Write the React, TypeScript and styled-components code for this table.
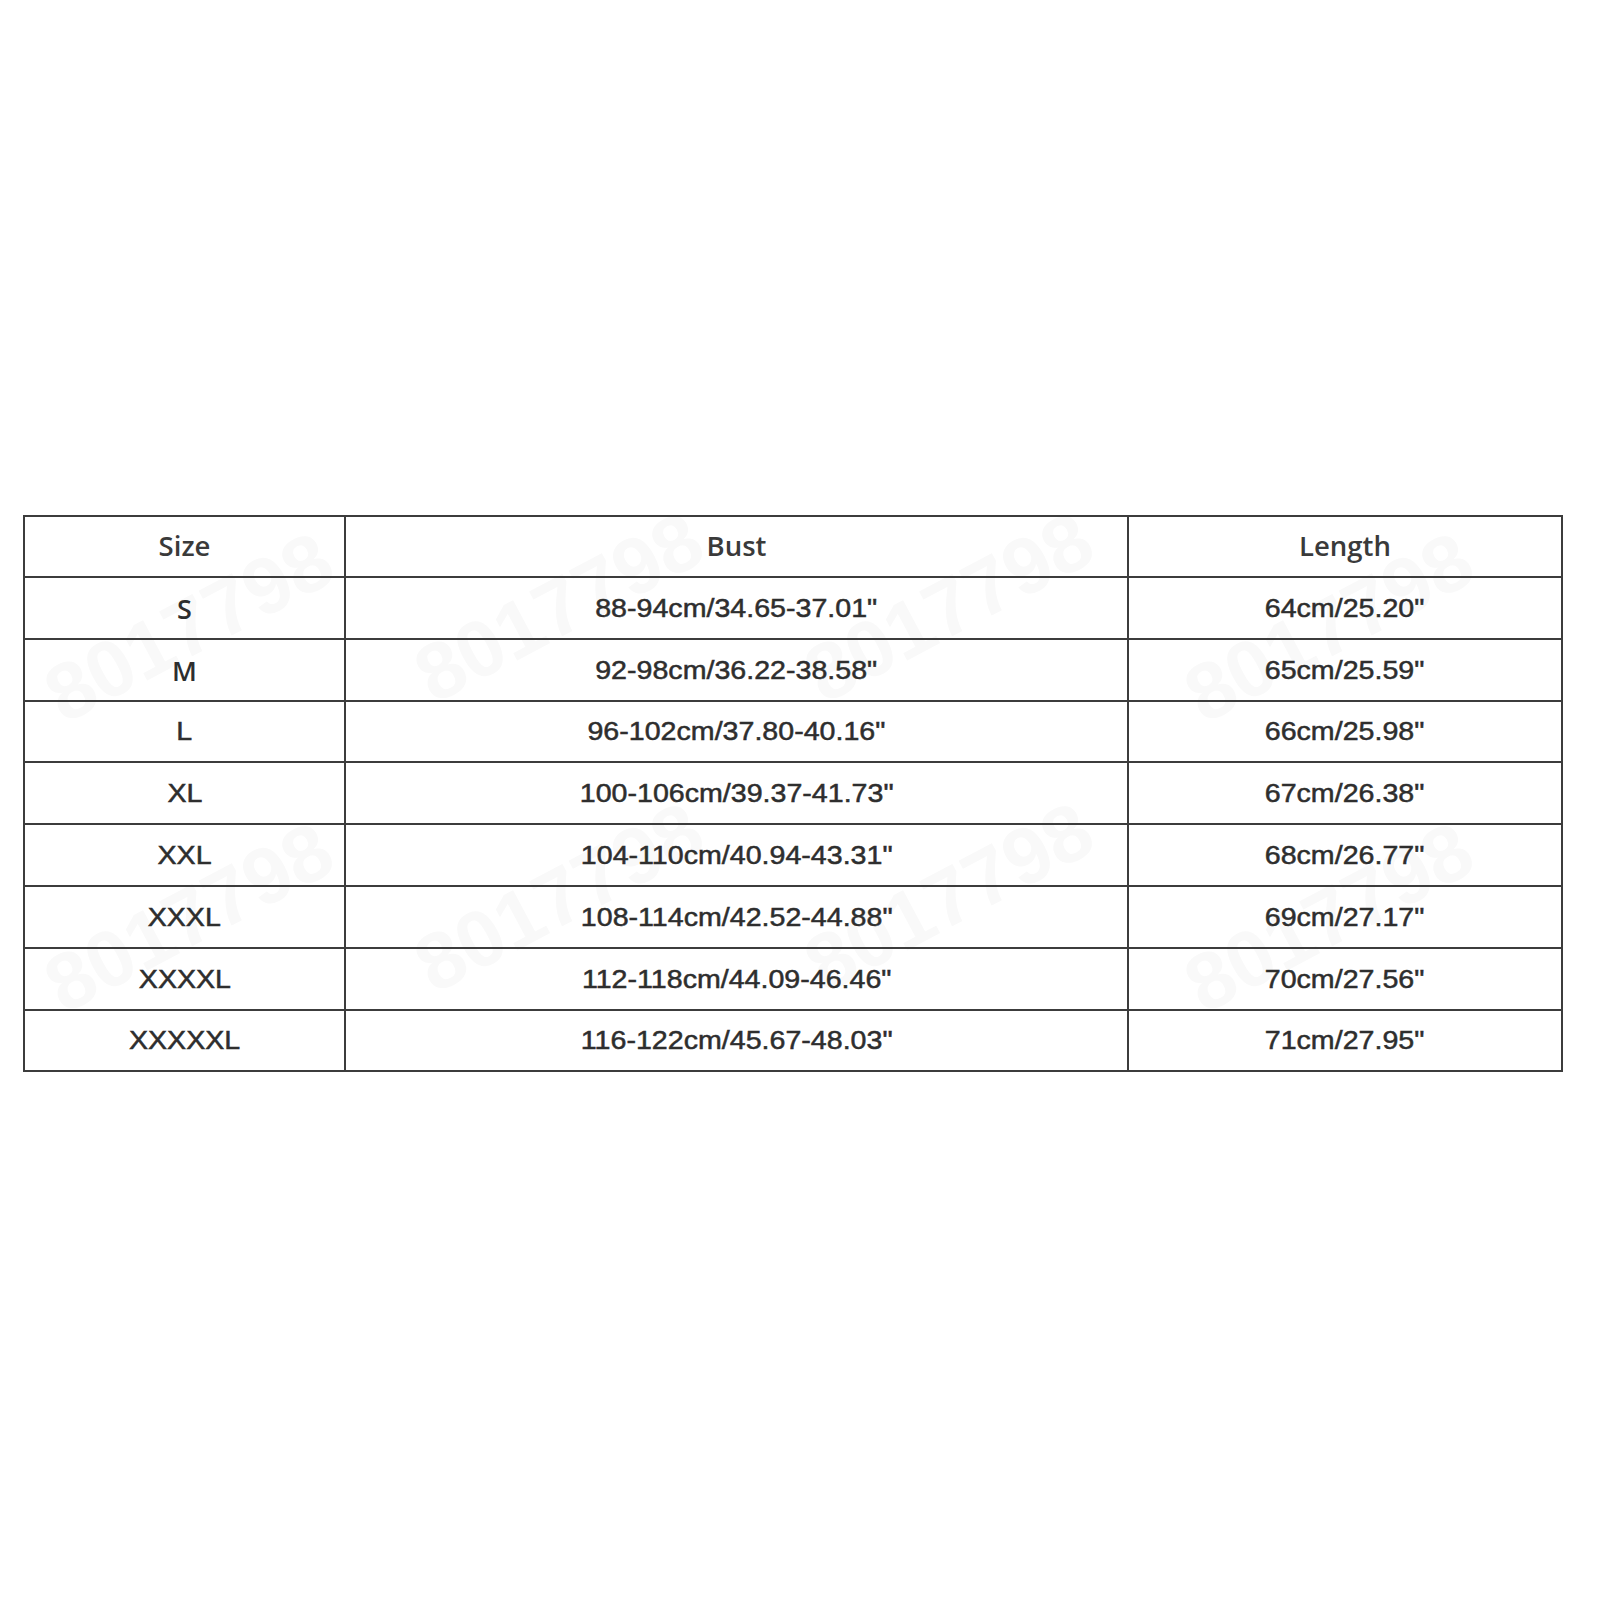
import styled, { createGlobalStyle } from 'styled-components';

const rows = [
  { size: 'S', bust: '88-94cm/34.65-37.01"', length: '64cm/25.20"', alt: true },
  { size: 'M', bust: '92-98cm/36.22-38.58"', length: '65cm/25.59"', alt: true },
  { size: 'L', bust: '96-102cm/37.80-40.16"', length: '66cm/25.98"' },
  { size: 'XL', bust: '100-106cm/39.37-41.73"', length: '67cm/26.38"' },
  { size: 'XXL', bust: '104-110cm/40.94-43.31"', length: '68cm/26.77"' },
  { size: 'XXXL', bust: '108-114cm/42.52-44.88"', length: '69cm/27.17"' },
  { size: 'XXXXL', bust: '112-118cm/44.09-46.46"', length: '70cm/27.56"' },
  { size: 'XXXXXL', bust: '116-122cm/45.67-48.03"', length: '71cm/27.95"' },
];

// faint seller watermark scattered over the chart
const marks = [
  { x: 30, y: 660 },
  { x: 400, y: 640 },
  { x: 790, y: 640 },
  { x: 1170, y: 660 },
  { x: 30, y: 950 },
  { x: 400, y: 930 },
  { x: 790, y: 930 },
  { x: 1170, y: 950 },
];

const App = () => {
  return (
    <Page>
      <GlobalStyle />
      {marks.map((m, i) => (
        <Watermark key={i} style={{ left: m.x, top: m.y }}>
          8017798
        </Watermark>
      ))}
      <Table>
        <HeadCell>Size</HeadCell>
        <HeadCell>Bust</HeadCell>
        <HeadCell>Length</HeadCell>
        {rows.map((row) => (
          <Row key={row.size}>
            <Cell>
              <Text $alt={row.alt}>{row.size}</Text>
            </Cell>
            <Cell>
              <Text>{row.bust}</Text>
            </Cell>
            <Cell>
              <Text>{row.length}</Text>
            </Cell>
          </Row>
        ))}
      </Table>
    </Page>
  );
};

const GlobalStyle = createGlobalStyle`
  body {
    margin: 0;
    background: #fff;
  }
`;

const Page = styled.div`
  position: relative;
  height: 1600px;
  padding: 515px 0 0 23px;
  box-sizing: border-box;
  overflow: hidden;
`;

const Table = styled.div`
  position: relative;
  display: grid;
  grid-template-columns: 321px 783px 434px;
  width: 1540px;
  border-top: 2px solid #3c3c3c;
  border-left: 2px solid #3c3c3c;
  box-sizing: border-box;
`;

const Row = styled.div`
  display: contents;
`;

const BaseCell = styled.div`
  display: flex;
  align-items: center;
  justify-content: center;
  border-right: 2px solid #3c3c3c;
  border-bottom: 2px solid #3c3c3c;
  box-sizing: border-box;
`;

const HeadCell = styled(BaseCell)`
  height: 61px;
  font-family: 'Open Sans', 'Liberation Sans', sans-serif;
  font-weight: 600;
  font-size: 27.5px;
  color: #3a3a3a;
  padding-bottom: 2px;
`;

const Cell = styled(BaseCell)`
  height: 61.8px;
  padding-top: 1px;
`;

const Text = styled.span<{ $alt?: boolean }>`
  display: inline-block;
  font-family: ${(p) => (p.$alt ? "'Open Sans', 'Liberation Sans', sans-serif" : "'Liberation Sans', Arial, sans-serif")};
  font-weight: ${(p) => (p.$alt ? 600 : 400)};
  font-size: ${(p) => (p.$alt ? '27px' : '26px')};
  color: #2e2e2e;
  -webkit-text-stroke: ${(p) => (p.$alt ? '0' : '0.5px #2e2e2e')};
  transform: ${(p) => (p.$alt ? 'none' : 'scaleX(1.1)')};
  white-space: nowrap;
`;

const Watermark = styled.div`
  position: absolute;
  font-family: 'Liberation Sans', Arial, sans-serif;
  font-weight: 700;
  font-size: 80px;
  color: #f9f9f9;
  transform: rotate(-28deg);
  transform-origin: left top;
  pointer-events: none;
  white-space: nowrap;
`;

export default App;
